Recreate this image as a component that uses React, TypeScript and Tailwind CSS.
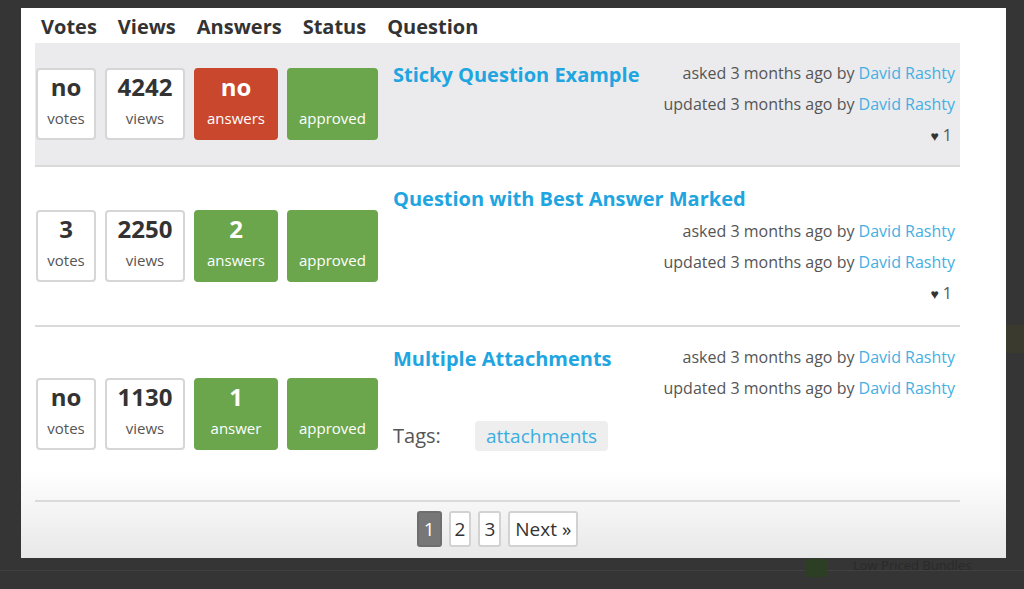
type Stat = { num: string; label: string; tone: 'plain' | 'red' | 'green' }

type Question = {
  title: string
  stats: Stat[]
  likes?: number
  tags?: string[]
  wrapMeta?: boolean
  pad: string
}

const questions: Question[] = [
  {
    title: 'Sticky Question Example',
    stats: [
      { num: 'no', label: 'votes', tone: 'plain' },
      { num: '4242', label: 'views', tone: 'plain' },
      { num: 'no', label: 'answers', tone: 'red' },
      { num: '', label: 'approved', tone: 'green' },
    ],
    likes: 1,
    pad: 'pb-[14px]',
  },
  {
    title: 'Question with Best Answer Marked',
    stats: [
      { num: '3', label: 'votes', tone: 'plain' },
      { num: '2250', label: 'views', tone: 'plain' },
      { num: '2', label: 'answers', tone: 'green' },
      { num: '', label: 'approved', tone: 'green' },
    ],
    likes: 1,
    wrapMeta: true,
    pad: 'pb-[16px]',
  },
  {
    title: 'Multiple Attachments',
    stats: [
      { num: 'no', label: 'votes', tone: 'plain' },
      { num: '1130', label: 'views', tone: 'plain' },
      { num: '1', label: 'answer', tone: 'green' },
      { num: '', label: 'approved', tone: 'green' },
    ],
    tags: ['attachments'],
    pad: 'pb-[49px]',
  },
]

const widths = ['w-[60px]', 'w-[80px]', 'w-[84px]', 'w-[91px]']

const toneClass = {
  plain: 'bg-white border-[#d6d6d6] text-[#333]',
  red: 'bg-[#c9472c] border-[#c9472c] text-white',
  green: 'bg-[#6ba64d] border-[#6ba64d] text-white',
}

function StatBox({ stat, width }: { stat: Stat; width: string }) {
  return (
    <div className={`${width} ${toneClass[stat.tone]} flex h-[72px] flex-col items-center rounded-[4px] border-2`}>
      <div className="mt-[2px] h-[30px] text-[24px] font-bold leading-[30px]">{stat.num}</div>
      <div className={`mt-[6px] text-[15px] leading-[20px] ${stat.tone === 'plain' ? 'text-[#555]' : 'text-white'}`}>
        {stat.label}
      </div>
    </div>
  )
}

function Meta({ likes }: { likes?: number }) {
  return (
    <div className="text-right text-[16px] leading-[31px] text-[#555]">
      <div>
        asked 3 months ago by <span className="text-[#45afe3]">David Rashty</span>
      </div>
      <div>
        updated 3 months ago by <span className="text-[#45afe3]">David Rashty</span>
      </div>
      {likes !== undefined && (
        <div className="pr-[3px] text-[#333]">
          <span className="text-[14px]">♥</span> <span className="text-[#555]">{likes}</span>
        </div>
      )}
    </div>
  )
}

function Row({ q, first }: { q: Question; first: boolean }) {
  return (
    <div className={`flex items-center border-b-2 border-[#dadada] ${first ? 'bg-[#ebebed]' : ''}`}>
      <div className="flex gap-[9px] pl-[1px]">
        {q.stats.map((s, i) => (
          <StatBox key={i} stat={s} width={widths[i]} />
        ))}
      </div>
      <div className={`ml-[15px] flex-1 pr-[5px] pt-[15px] ${q.pad}`}>
        {q.wrapMeta ? (
          <>
            <h2 className="mt-[2px] text-[20px] font-bold leading-[30px] text-[#21a5e0]">{q.title}</h2>
            <div className="mt-[2px]">
              <Meta likes={q.likes} />
            </div>
          </>
        ) : (
          <div className="flex justify-between">
            <h2 className="mt-[2px] text-[20px] font-bold leading-[30px] text-[#21a5e0]">{q.title}</h2>
            <Meta likes={q.likes} />
          </div>
        )}
        {q.tags && (
          <div className="mt-[17px] flex items-center">
            <span className="w-[82px] text-[20px] text-[#555]">Tags:</span>
            {q.tags.map(t => (
              <span key={t} className="rounded-[4px] bg-[#eeeeee] px-[11px] text-[19px] leading-[30px] text-[#3aaee0]">
                {t}
              </span>
            ))}
          </div>
        )}
      </div>
    </div>
  )
}

export default function App() {
  return (
    <div className="relative h-[589px] w-[1024px] overflow-hidden bg-[#353535] font-['Open_Sans',sans-serif]">
      <div className="flex pt-[8px]">
        <div className="ml-[21px] flex h-[550px] w-[985px] flex-col bg-[linear-gradient(to_bottom,#ffffff_84%,#e8e8e8)] pl-[14px] pr-[46px] pt-[5px]">
          <div className="flex h-[30px] gap-[21px] pl-[6px] text-[20px] font-bold leading-[28px] text-[#333]">
            <span>Votes</span>
            <span>Views</span>
            <span>Answers</span>
            <span>Status</span>
            <span>Question</span>
          </div>
          {questions.map((q, i) => (
            <Row key={q.title} q={q} first={i === 0} />
          ))}
          <div className="mt-[9px] flex justify-center gap-[7px] text-[19px] text-[#333]">
            <span className="rounded-[3px] border-2 border-[#6e6e6e] bg-[#777] px-[5px] leading-[32px] text-white">1</span>
            <span className="rounded-[3px] border-2 border-[#d2d2d2] bg-white px-[4px] leading-[32px]">2</span>
            <span className="rounded-[3px] border-2 border-[#d2d2d2] bg-white px-[4px] leading-[32px]">3</span>
            <span className="rounded-[3px] border-2 border-[#d2d2d2] bg-white px-[5px] leading-[32px]">Next »</span>
          </div>
        </div>
        <div className="flex flex-1 flex-col pt-[317px]">
          <div className="h-[28px] bg-[#3b3a2f]" />
        </div>
      </div>
      <div className="mt-[1px] flex h-[12px] items-center border-b border-[#414141] pl-[805px] text-[13px] leading-[12px] text-[#2a2a2a]">
        <span className="mr-[26px] h-[18px] w-[22px] self-start bg-[#2c3f24]" />
        <span>Low Priced Bundles</span>
      </div>
    </div>
  )
}
